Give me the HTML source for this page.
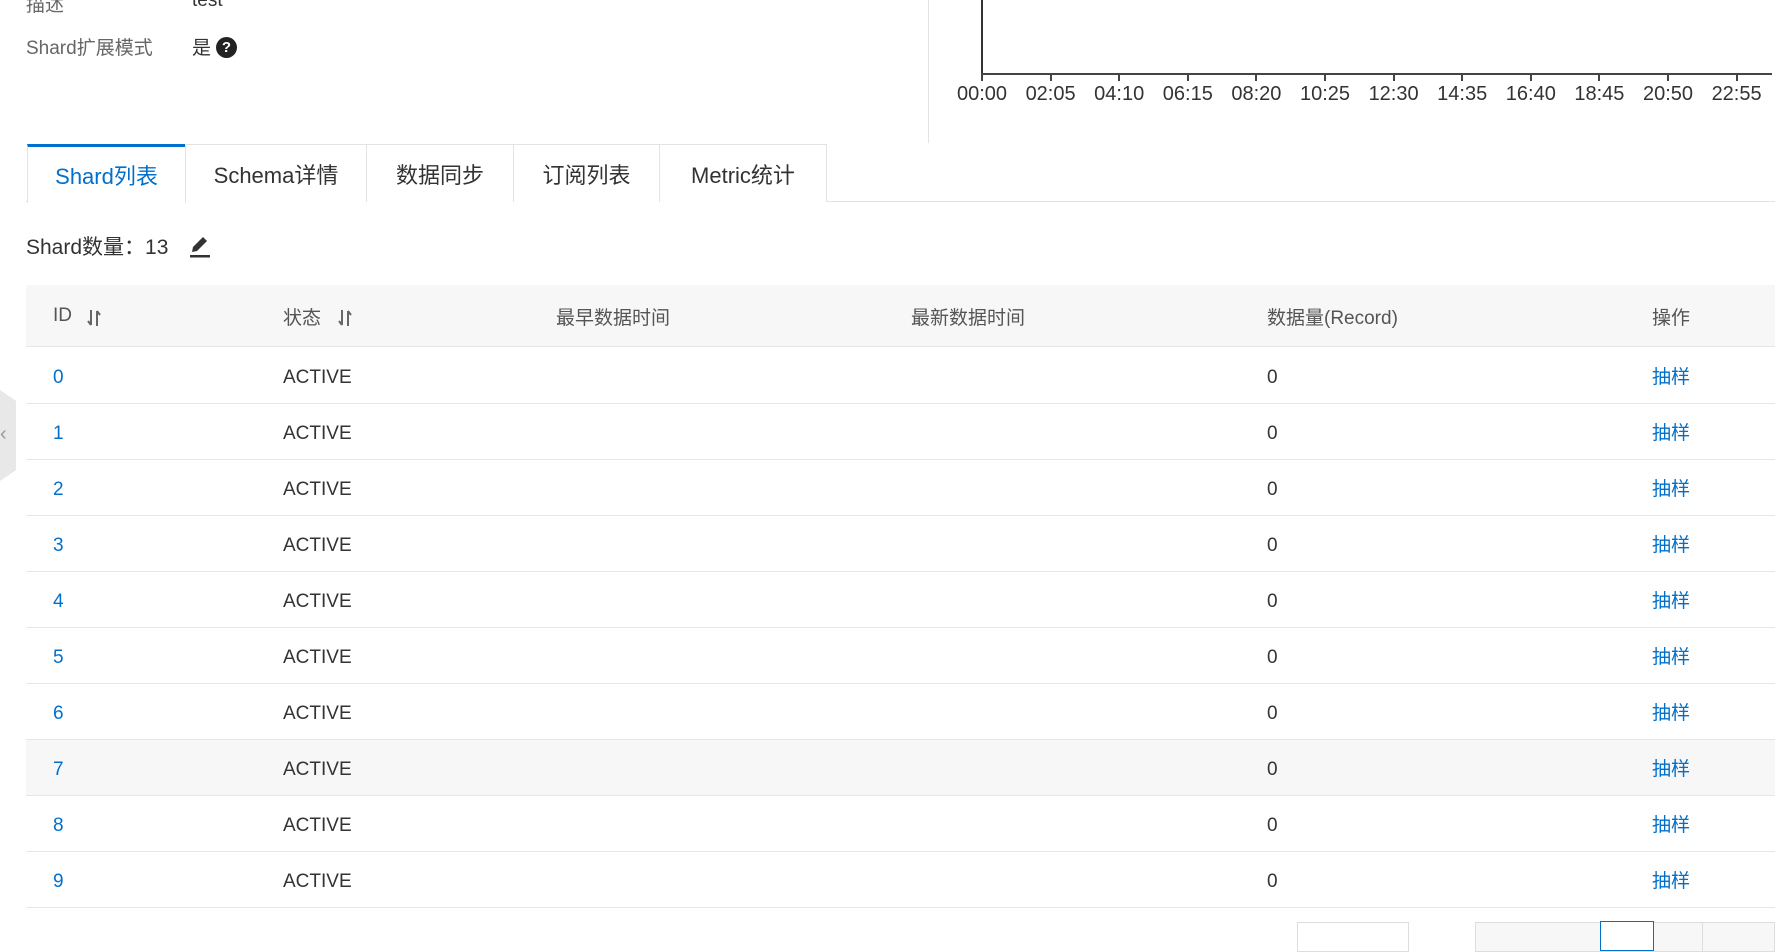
<!DOCTYPE html>
<html><head><meta charset="utf-8"><style>
*{margin:0;padding:0;box-sizing:border-box}
body{width:1775px;height:938px;overflow:hidden;background:#fff;font-family:"Liberation Sans","Noto Sans CJK SC",sans-serif;color:#333;position:relative}
.a{position:absolute;white-space:nowrap}
.lbl{color:#666;font-size:19px}
.tab{position:absolute;top:144px;height:58px;border:1px solid #e3e3e3;border-bottom:none;font-size:22px;color:#333;display:flex;align-items:center;justify-content:center;background:#fff}
.hd{position:absolute;top:285px;left:26px;right:0;height:62px;background:#f7f7f7;border-bottom:1px solid #e6e6e6}
.row{position:absolute;left:26px;right:0;height:56px;border-bottom:1px solid #e6e6e6;font-size:19px}
.row span{position:absolute;top:19px}
.row span.c{top:14px}
.blue{color:#0070cc}
.tick{position:absolute;top:74px;width:2px;height:7px;background:#444}
.tl{position:absolute;top:83px;font-size:20px;color:#333;transform:translateX(-50%)}
</style></head><body>
<div class="a lbl" style="left:26px;top:-10px">描述</div>
<div class="a" style="left:192px;top:-10px;font-size:19px">test</div>
<div class="a lbl" style="left:26px;top:33px">Shard扩展模式</div>
<div class="a" style="left:192px;top:33px;font-size:19px">是</div>
<div class="a" style="left:216px;top:37px;width:21px;height:21px;border-radius:50%;background:#222;color:#fff;font-size:15px;font-weight:bold;text-align:center;line-height:21px">?</div>

<div class="a" style="left:928px;top:0;width:1px;height:143px;background:#e3e3e3"></div>
<div class="a" style="left:981px;top:0;width:2px;height:75px;background:#333"></div>
<div class="a" style="left:981px;top:73px;width:791px;height:2px;background:#444"></div>
<div id="ax"></div>

<div class="a" style="left:26px;top:201px;right:0;height:1px;background:#e3e3e3"></div>
<div class="tab" style="left:27px;width:159px;color:#0070cc;border-top:3px solid #0070cc;height:59px">Shard列表</div>
<div class="tab" style="left:185px;width:182px">Schema详情</div>
<div class="tab" style="left:366px;width:148px">数据同步</div>
<div class="tab" style="left:513px;width:147px">订阅列表</div>
<div class="tab" style="left:659px;width:168px">Metric统计</div>

<div class="a" style="left:26px;top:231px;font-size:21px">Shard数量：13</div>
<svg class="a" style="left:188px;top:233px" width="24" height="26" viewBox="0 0 24 26"><path d="M4 19 L5 14 L15 4 L19 8 L9 18 Z" fill="#333"/><rect x="2" y="22" width="20" height="2.5" fill="#333"/></svg>

<div class="hd"></div>
<div class="a" style="left:53px;top:305px;font-size:19px;color:#555">ID</div>
<div class="a" style="left:283px;top:303px;font-size:19px;color:#555">状态</div>
<svg class="a" style="left:86px;top:308px" width="16" height="20" viewBox="0 0 16 20"><path d="M5 2V17M2 13L5 17M11 18V3M11 3L14 7" stroke="#666" stroke-width="2" fill="none"/></svg>
<svg class="a" style="left:337px;top:308px" width="16" height="20" viewBox="0 0 16 20"><path d="M5 2V17M2 13L5 17M11 18V3M11 3L14 7" stroke="#666" stroke-width="2" fill="none"/></svg>
<div class="a" style="left:556px;top:303px;font-size:19px;color:#555">最早数据时间</div>
<div class="a" style="left:911px;top:303px;font-size:19px;color:#555">最新数据时间</div>
<div class="a" style="left:1267px;top:303px;font-size:19px;color:#555">数据量(Record)</div>
<div class="a" style="left:1652px;top:303px;font-size:19px;color:#555">操作</div>
<div id="rows"></div>

<div class="a" style="left:0;top:390px;width:16px;height:91px;background:#e8e8e8;clip-path:polygon(0 0,100% 12%,100% 88%,0 100%)"></div>
<div class="a" style="left:0;top:423px;font-size:20px;color:#999">‹</div>

<div class="a" style="left:1297px;top:922px;width:112px;height:30px;border:1px solid #ddd"></div>
<div class="a" style="left:1475px;top:922px;width:300px;height:30px;border:1px solid #ddd;background:#f7f7f7"></div>
<div class="a" style="left:1600px;top:921px;width:54px;height:30px;border:1px solid #0070cc;background:#fff"></div>
<div class="a" style="left:1702px;top:922px;width:1px;height:30px;background:#ddd"></div>
<script>
var ax='',labels=['00:00','02:05','04:10','06:15','08:20','10:25','12:30','14:35','16:40','18:45','20:50','22:55'];
for(var i=0;i<12;i++){var x=982+i*68.6;ax+='<div class="tick" style="left:'+(x-1)+'px"></div><div class="tl" style="left:'+x+'px">'+labels[i]+'</div>';}
document.getElementById('ax').innerHTML=ax;
var r='';for(var i=0;i<10;i++){var t=348+i*56;r+='<div class="row" style="top:'+t+'px;'+(i==7?'background:#f7f7f7':'')+'"><span class="blue" style="left:27px">'+i+'</span><span style="left:257px">ACTIVE</span><span style="left:1241px">0</span><span class="blue c" style="left:1626px">抽样</span></div>';}
document.getElementById('rows').innerHTML=r;
</script>
</body></html>
